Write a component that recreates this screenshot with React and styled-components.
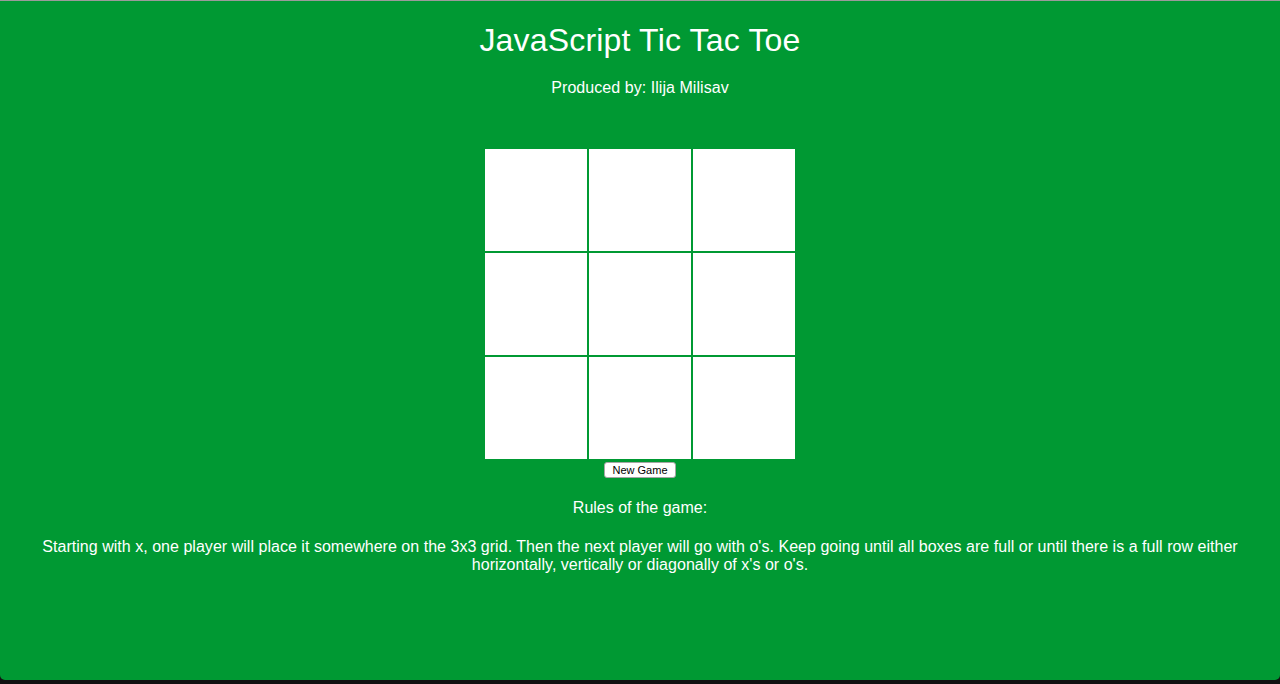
import React, { useState } from "react";
import styled, { createGlobalStyle } from "styled-components";

const Global = createGlobalStyle`
  html, body { margin: 0; padding: 0; background: #111; }
  body { font-family: "Liberation Sans", Arial, Helvetica, sans-serif; }
`;

const Frame = styled.div`
  width: 1280px;
  height: 684px;
  display: flex;
  flex-direction: column;
  background: #111;
  border-top: 1px solid #9b9b9b;
  box-sizing: border-box;
  overflow: hidden;
`;

const Page = styled.main`
  height: 679px;
  background: #009933;
  color: #fff;
  border-radius: 0 0 5px 5px;
  display: flex;
  flex-direction: column;
  align-items: center;
  padding: 0 20px;
  box-sizing: border-box;
  text-align: center;
`;

const Title = styled.h1`
  margin: 21px 0 0;
  font-size: 32px;
  font-weight: normal;
  line-height: 37px;
  letter-spacing: 0.18px;
`;

const Byline = styled.p`
  margin: 20px 0 0;
  font-size: 16px;
  line-height: 18px;
  letter-spacing: 0.05px;
`;

const Board = styled.div`
  margin-top: 52px;
  display: grid;
  grid-template-columns: repeat(3, 102px);
  grid-template-rows: repeat(3, 102px);
  gap: 2px;
`;

const Cell = styled.button`
  border: none;
  padding: 0;
  margin: 0;
  background: #fff;
  color: #009933;
  font-family: "Liberation Sans", Arial, sans-serif;
  font-size: 64px;
  cursor: pointer;
`;

const NewGame = styled.button`
  margin-top: 3px;
  height: 16px;
  padding: 0 7px;
  font-family: "Liberation Sans", Arial, sans-serif;
  font-size: 11px;
  line-height: 14px;
  color: #000;
  background: #fff;
  border: 1px solid #a6a6a6;
  border-radius: 3px;
  cursor: pointer;
`;

const RulesHeading = styled.p`
  margin: 21px 0 0;
  font-size: 16px;
  line-height: 18px;
`;

const Rules = styled.p`
  margin: 21px 0 0;
  font-size: 16px;
  line-height: 18px;
  letter-spacing: 0.03px;
`;

export default function App() {
  const [cells, setCells] = useState(Array(9).fill(""));
  const [turn, setTurn] = useState("x");

  const play = (i) => {
    if (cells[i]) return;
    const next = cells.slice();
    next[i] = turn;
    setCells(next);
    setTurn(turn === "x" ? "o" : "x");
  };

  return (
    <>
      <Global />
      <Frame>
        <Page>
          <Title>JavaScript Tic Tac Toe</Title>
          <Byline>Produced by: Ilija Milisav</Byline>
          <Board>
            {cells.map((c, i) => (
              <Cell key={i} onClick={() => play(i)}>
                {c}
              </Cell>
            ))}
          </Board>
          <NewGame
            onClick={() => {
              setCells(Array(9).fill(""));
              setTurn("x");
            }}
          >
            New Game
          </NewGame>
          <RulesHeading>Rules of the game:</RulesHeading>
          <Rules>
            Starting with x, one player will place it somewhere on the 3x3 grid. Then the next player will go with o's. Keep going until all boxes are full or until there is a full row either horizontally, vertically or diagonally of x's or o's.
          </Rules>
        </Page>
      </Frame>
    </>
  );
}
